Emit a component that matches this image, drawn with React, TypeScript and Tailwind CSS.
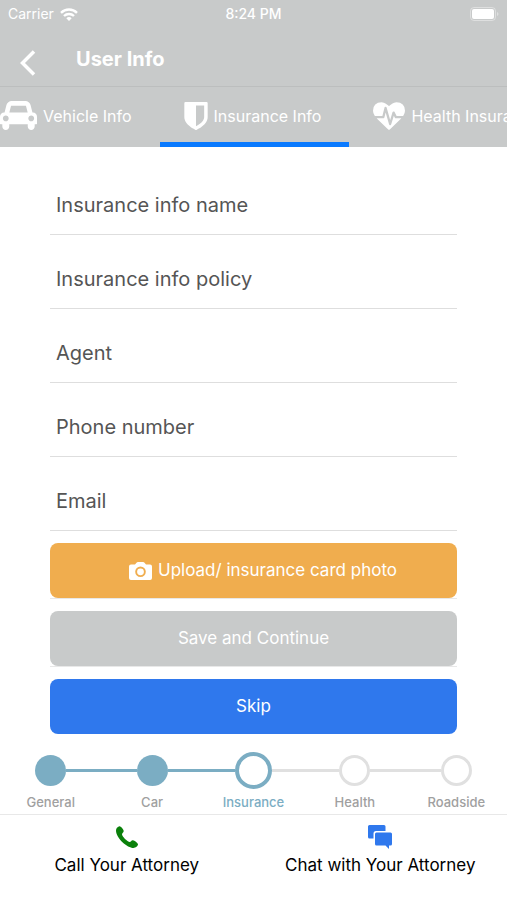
import React from 'react';
import { clsx } from 'clsx';

interface IconProps {
  className?: string;
}

const CarIcon: React.FC<IconProps> = ({ className }) => (
  <svg viewBox="0 128 2048 1600" fill="currentColor" className={className} aria-hidden="true">
    <path d="M480 1088q0-66-47-113t-113-47-113 47-47 113 47 113 113 47 113-47 47-113zm36-320h1016l-89-357q-2-8-14-17.5t-21-9.5h-768q-9 0-21 9.5t-14 17.5zm1372 320q0-66-47-113t-113-47-113 47-47 113 47 113 113 47 113-47 47-113zm160-96v384q0 14-9 23t-23 9h-96v128q0 80-56 136t-136 56-136-56-56-136v-128h-1024v128q0 80-56 136t-136 56-136-56-56-136v-128h-96q-14 0-23-9t-9-23v-384q0-93 65.5-158.5t158.5-65.5h28l105-419q23-94 104-157.5t179-63.5h768q98 0 179 63.5t104 157.5l105 419h28q93 0 158.5 65.5t65.5 158.5z" />
  </svg>
);

const ShieldIcon: React.FC<IconProps> = ({ className }) => (
  <svg viewBox="256 128 1280 1536" fill="currentColor" className={className} aria-hidden="true">
    <path d="M1344 960v-640h-448v1137q119-63 213-137 235-184 235-360zm192-768v768q0 86-33.5 170.5t-83 150-118 127.5-126.5 103-121 77.5-89.5 49.5-42.5 20q-12 6-26 6t-26-6q-16-7-42.5-20t-89.5-49.5-121-77.5-126.5-103-118-127.5-83-150-33.5-170.5v-768q0-26 19-45t45-19h1152q26 0 45 19t19 45z" />
  </svg>
);

const HeartbeatIcon: React.FC<IconProps> = ({ className }) => (
  <svg viewBox="0 128 1792 1536" fill="currentColor" className={className} aria-hidden="true">
    <path d="M1280 1024h305q-5 6-10 10.5t-9 7.5l-3 4-623 600q-18 18-44 18t-44-18l-624-602q-5-2-21-20h369q22 0 39.5-13.5t22.5-34.5l70-281 190 667q6 20 23 33t39 13q21 0 38-13t23-33l146-485 56 112q18 35 57 35zm512-428q0 145-103 300h-369l-111-221q-8-17-25.5-27t-36.5-8q-45 5-56 46l-129 430-196-686q-6-20-23.5-33t-39.5-13-39 13.5-22 34.5l-116 464h-423q-103-155-103-300 0-220 127-344t351-124q62 0 126.5 21.5t120 58 95.5 68.5 76 68q36-36 76-68t95.5-68.5 120-58 126.5-21.5q224 0 351 124t127 344z" />
  </svg>
);

const CameraIcon: React.FC<IconProps> = ({ className }) => (
  <svg viewBox="0 0 23 18" className={className} aria-hidden="true">
    <path
      fill="currentColor"
      fillRule="evenodd"
      d="M2 2.500h4L7.500.8Q8 0 9 0h5q1 0 1.500.8L17 2.500h4q2 0 2 2V16q0 2-2 2H2q-2 0-2-2V4.500q0-2 2-2zM11.500 4.500a5.300 5.300 0 1 0 0 10.600 5.300 5.300 0 0 0 0-10.600zm0 1.900a3.400 3.400 0 1 1 0 6.800 3.400 3.400 0 0 1 0-6.800z"
    />
  </svg>
);

const PhoneIcon: React.FC<IconProps> = ({ className }) => (
  <svg viewBox="0 0 22 22" fill="currentColor" className={className} aria-hidden="true">
    <path d="M3.200.2C4.500-.3 7.500 3 7.700 5 7.800 6.500 6 7 6 8.500 7 11.500 10.500 14.700 13.500 16 15 16.200 15 14 17 14.200 18.500 14.500 21.700 16.800 22 18.300 22 20 19.500 22 17.500 22 11.500 22 0 12.500 0 4.500 0 2.500 1.500.8 3.200.2z" />
  </svg>
);

const ChatIcon: React.FC<IconProps> = ({ className }) => (
  <svg viewBox="0 0 24 24" fill="currentColor" className={className} aria-hidden="true">
    <path d="M1.500 0h14.500q1.500 0 1.500 1.500V6H8Q5.500 6 5.500 8.500v5H1.500Q0 13.500 0 12V1.500Q0 0 1.500 0z" />
    <path d="M8.500 7.500h14q1.500 0 1.500 1.500v10q0 1.500-1.500 1.500h-1.500V24l-3.500-3.500h-9Q7 20.500 7 19V9q0-1.500 1.500-1.500z" />
  </svg>
);

const WifiIcon: React.FC<IconProps> = ({ className }) => (
  <svg viewBox="0 0 18 13" fill="none" stroke="currentColor" strokeWidth="2.4" className={className} aria-hidden="true">
    <path d="M1 4.800a11.500 11.500 0 0 1 16 0M4 8a7.300 7.300 0 0 1 10 0" />
    <path d="M9 13 6.300 10.200a4 4 0 0 1 5.400 0z" fill="currentColor" stroke="none" />
  </svg>
);

const tabs = [
  { label: 'Vehicle Info', icon: <CarIcon className="h-[29px] w-[37px] shrink-0" />, className: 'pr-7' },
  { label: 'Insurance Info', icon: <ShieldIcon className="h-7 w-6 shrink-0" />, className: 'pr-7 pl-6', active: true },
  { label: 'Health Insurance', icon: <HeartbeatIcon className="h-7 w-8 shrink-0" />, className: 'pr-7 pl-6' },
];

const fields = [
  { name: 'name', label: 'Insurance info name', type: 'text' },
  { name: 'policy', label: 'Insurance info policy', type: 'text' },
  { name: 'agent', label: 'Agent', type: 'text' },
  { name: 'phone', label: 'Phone number', type: 'tel' },
  { name: 'email', label: 'Email', type: 'email' },
];

const steps = ['General', 'Car', 'Insurance', 'Health', 'Roadside'];
const currentStep = 2;

const StatusBar = () => (
  <div className="grid h-7 grid-cols-3 items-center px-2 text-sm">
    <div className="flex items-center gap-1.5">
      <span>Carrier</span>
      <WifiIcon className="h-[13px] w-[18px]" />
    </div>
    <span className="text-center font-medium">8:24 PM</span>
    <svg viewBox="0 0 29 14" className="h-3.5 w-[29px] justify-self-end" aria-hidden="true">
      <rect x=".5" y=".5" width="25" height="13" rx="3.5" fill="none" stroke="white" opacity=".4" />
      <rect x="2" y="2" width="22" height="10" rx="2" fill="white" />
      <path d="M27 5q1.500.5 1.500 2T27 9z" fill="white" opacity=".4" />
    </svg>
  </div>
);

const Stepper = () => (
  <ol className="grid grid-cols-5 pt-[17px]">
    {steps.map((step, i) => (
      <li key={step} className="flex flex-col items-center" aria-current={i === currentStep ? 'step' : undefined}>
        <div className="flex h-[38px] w-full items-center">
          <span
            className={clsx(
              'flex-1',
              i > 0 && (i <= currentStep ? 'h-[3px] bg-[#7badc3]' : 'h-[3px] bg-[#e0e0e0]'),
            )}
          />
          <span
            className={clsx(
              'shrink-0 rounded-full',
              i < currentStep && 'size-[31px] bg-[#7badc3]',
              i === currentStep && 'size-[37px] border-4 border-[#7badc3]',
              i > currentStep && 'size-[31px] border-[3px] border-[#e0e0e0]',
            )}
          />
          <span
            className={clsx(
              'flex-1',
              i < steps.length - 1 && (i < currentStep ? 'h-[3px] bg-[#7badc3]' : 'h-[3px] bg-[#e0e0e0]'),
            )}
          />
        </div>
        <span
          className={clsx(
            'mt-[3px] text-[13px] leading-5 font-medium',
            i === currentStep ? 'text-[#7badc3]' : 'text-[#a0a0a0]',
          )}
        >
          {step}
        </span>
      </li>
    ))}
  </ol>
);

export default function App() {
  return (
    <div className="flex min-h-screen flex-col overflow-x-hidden bg-white font-['Inter','Liberation_Sans',sans-serif]">
      <header className="bg-[#c8caca] text-white">
        <StatusBar />
        <div className="flex h-[59px] items-center border-b border-[#bcbebe] pt-1 pl-5">
          <button type="button" aria-label="Back" className="mt-2">
            <svg viewBox="0 0 16 26" className="h-[26px] w-4" fill="none" stroke="currentColor" strokeWidth="3.5" aria-hidden="true">
              <path d="M14 1.500 2.500 13 14 24.500" />
            </svg>
          </button>
          <h1 className="ml-10 text-xl leading-7 font-bold">User Info</h1>
        </div>
        <nav className="flex h-[60px] overflow-hidden">
          {tabs.map((tab) => (
            <button
              key={tab.label}
              type="button"
              className={clsx(
                'flex shrink-0 items-center gap-1.5 border-b-[5px] pt-0.5 text-base whitespace-nowrap',
                tab.active ? 'border-[#0a7aff]' : 'border-transparent',
                tab.className,
              )}
            >
              {tab.icon}
              {tab.label}
            </button>
          ))}
        </nav>
      </header>

      <form className="px-[50px] pt-3.5">
        {fields.map((field) => (
          <div key={field.name} className="pt-3.5">
            <input
              type={field.type}
              name={field.name}
              aria-label={field.label}
              placeholder={field.label}
              className="block h-[60px] w-full border-b border-[#dedede] px-1.5 text-xl text-[#555] outline-none placeholder:text-[#555]"
            />
          </div>
        ))}
        <div className="flex flex-col gap-3 pt-3 text-[17px] text-white">
          <div className="border-b border-[#e8e8e8]">
            <button type="button" className="flex h-[55px] w-full items-center justify-center gap-1.5 rounded-lg bg-[#f0ad4e] pl-[19px]">
              <CameraIcon className="h-[18px] w-[23px]" />
              Upload/ insurance card photo
            </button>
          </div>
          <div className="border-b border-[#e8e8e8]">
            <button type="submit" className="h-[55px] w-full rounded-lg bg-[#c8caca]">
              Save and Continue
            </button>
          </div>
          <button type="button" className="h-[55px] w-full rounded-lg bg-[#2f78ed]">
            Skip
          </button>
        </div>
      </form>

      <Stepper />

      <footer className="mt-0.5 grid grid-cols-2 border-t border-[#e8e8e8] pt-2.5 text-[17px] leading-6 text-black">
        <a href="#call" className="flex flex-col items-center gap-1">
          <span className="flex h-6 items-center">
            <PhoneIcon className="size-[22px] text-[#0a800a]" />
          </span>
          Call Your Attorney
        </a>
        <a href="#chat" className="flex flex-col items-center gap-1">
          <ChatIcon className="size-6 text-[#2f78ed]" />
          Chat with Your Attorney
        </a>
      </footer>
    </div>
  );
}
